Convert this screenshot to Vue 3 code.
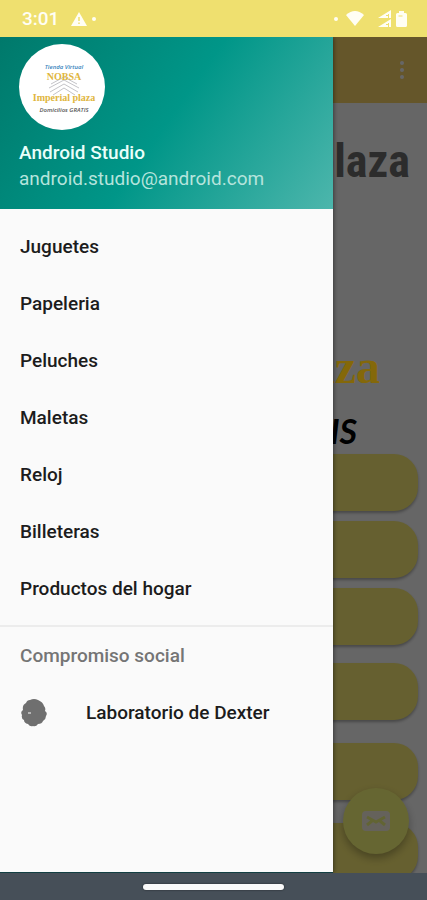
<script setup>
const categories = [
  'Juguetes',
  'Papeleria',
  'Peluches',
  'Maletas',
  'Reloj',
  'Billeteras',
  'Productos del hogar',
]
const groups = [categories.slice(0, 3), categories.slice(3, 4), categories.slice(4, 5), categories.slice(5, 6)]
</script>

<template>
  <div class="phone">
    <header class="status">
      <span class="time">3:01</span>
      <svg class="alert" viewBox="0 0 16 14" width="16" height="14" aria-hidden="true">
        <path d="M8 0 L16 14 H0 Z" fill="#fffef4" />
        <path d="M8 5v4M8 10.500v1.500" stroke="#efe06f" stroke-width="1.500" />
      </svg>
      <span class="dot"></span>
      <span class="space"></span>
      <span class="dot"></span>
      <svg class="wifi" viewBox="0 0 18 15" width="18" height="15" aria-hidden="true">
        <path d="M0 4 Q9 -4 18 4 L9 15 Z" fill="#fffef4" />
      </svg>
      <svg class="signal" viewBox="0 0 14 18" width="14" height="18" aria-hidden="true">
        <path d="M13 0V8H0ZM13 9V17H0Z" fill="#fffef4" />
        <path d="M8 5.500h2M8 14.500h2M10.500 4v4M10.500 13v4" stroke="#efe06f" stroke-width="1" />
      </svg>
      <svg class="battery" viewBox="0 0 11 16" width="11" height="16" aria-hidden="true">
        <path d="M3 0h5v2h1.500q1.500 0 1.500 1.500v11q0 1.500-1.500 1.500h-8q-1.500 0-1.500-1.500v-11q0-1.500 1.500-1.500H3Z" fill="#fffef4" />
        <path d="M2.500 5h4" stroke="#efe06f" />
      </svg>
    </header>

    <main class="screen">
      <div class="page">
        <div class="toolbar">
          <button class="more" type="button" aria-label="Más opciones">
            <i></i><i></i><i></i>
          </button>
        </div>
        <h1 class="title">Imperial plaza</h1>
        <p class="brand">Imperial plaza</p>
        <p class="promo">Domicilios GRATIS</p>
        <div class="actions">
          <div v-for="(group, i) in groups" :key="i" class="group">
            <button v-for="name in group" :key="name" class="action" type="button" :aria-label="name"></button>
          </div>
        </div>
        <button class="fab" type="button" aria-label="Correo">
          <svg viewBox="0 0 28 20" width="28" height="20" aria-hidden="true">
            <rect width="28" height="20" rx="4" fill="#fbf4f4" fill-opacity="0.85" />
            <path d="M5 6 L14 11 L23 6M5 14l5-4M23 14l-5-4" fill="none" stroke="#f4fa80" stroke-width="3" />
          </svg>
        </button>
      </div>
      <div class="scrim"></div>

      <aside class="drawer">
        <div class="profile">
          <svg class="avatar" viewBox="0 0 86 86" width="86" height="86" role="img" aria-label="Imperial plaza">
            <circle cx="43" cy="43" r="43" fill="#fff" />
            <g fill="none" stroke="#c4c4c8" stroke-width="1">
              <path d="M32 40 L45 33 L58 40M30 44 L45 36 L60 44M31 48 L45 40 L59 48M34 51 L45 44 L56 51" />
            </g>
            <g text-anchor="middle">
              <text x="45" y="25" class="tiny blue">Tienda Virtual</text>
              <text x="45" y="36" class="mark">NOBSA</text>
              <text x="45" y="57" class="mark">Imperial plaza</text>
              <text x="45" y="68" class="tiny">Domicilios GRATIS</text>
            </g>
          </svg>
          <span class="name">Android Studio</span>
          <span class="mail">android.studio@android.com</span>
        </div>
        <nav class="menu">
          <a v-for="name in categories" :key="name" class="item" href="#">{{ name }}</a>
        </nav>
        <section class="social">
          <h2 class="subhead">Compromiso social</h2>
          <a class="item with-icon" href="#">
            <svg viewBox="0 0 28 28" width="28" height="28" aria-hidden="true">
              <path d="M10 1 Q14 -1 18 1 Q23 3 24 7 Q26 9 25 12 Q28 14 26 17 Q26 20 23 22 Q22 25 18 25 Q16 28 13 27 Q10 28 8 25 Q4 24 4 21 Q1 20 2 16 Q0 13 3 11 Q2 6 6 4 Q7 1 10 1 Z" fill="#6f6f6f" />
              <path d="M8 14h3" stroke="#b5b5b5" stroke-width="2" />
            </svg>
            <span>Laboratorio de Dexter</span>
          </a>
        </section>
      </aside>
    </main>

    <footer class="navbar"><span class="handle"></span></footer>
  </div>
</template>

<style>
body {
  margin: 0;
}
</style>

<style scoped>
.phone {
  display: flex;
  flex-direction: column;
  height: 100vh;
  font-family: Roboto, "Liberation Sans", sans-serif;
  background: #fff;
}
button {
  border: 0;
  padding: 0;
}
.status {
  display: flex;
  align-items: center;
  flex: none;
  height: 37px;
  padding: 0 20px 0 22px;
  box-sizing: border-box;
  background: #efe06f;
  color: #fffef4;
}
.time {
  font-size: 19px;
  font-weight: 500;
}
.alert {
  margin: 0 5px 0 12px;
}
.dot {
  width: 4px;
  height: 4px;
  border-radius: 50%;
  background: #fffef4;
}
.space {
  flex: 1;
}
.wifi {
  margin: 0 14px 0 8px;
}
.signal {
  margin-right: 4px;
}
.screen {
  position: relative;
  flex: 1;
  min-height: 0;
  overflow: hidden;
}
.page {
  display: flex;
  flex-direction: column;
  height: 100%;
  overflow: hidden;
  background: #fff;
}
.toolbar {
  display: flex;
  flex: none;
  justify-content: flex-end;
  align-items: center;
  height: 66px;
  padding-right: 15px;
  background: #fcd769;
}
.more {
  display: flex;
  flex-direction: column;
  align-items: center;
  gap: 3px;
  width: 20px;
  background: none;
}
.more i {
  width: 4px;
  height: 4px;
  border-radius: 50%;
  background: #fff;
}
.title,
.brand,
.promo {
  flex: none;
  margin: 0;
  text-align: right;
  white-space: nowrap;
}
.title {
  padding: 30px 17px 0 0;
  font: 700 46px/56px "Roboto Condensed", "Liberation Sans Narrow", Roboto, sans-serif;
  color: #6e6e6e;
}
.brand {
  position: relative;
  z-index: 1;
  padding: 150px 47px 0 0;
  font: 700 48px/56px "Liberation Serif", serif;
  color: #84680a;
}
.promo {
  padding: 16px 70px 0 0;
  font: italic 700 34px/40px Lato, "Open Sans", sans-serif;
  color: #000;
}
.actions {
  display: flex;
  flex-direction: column;
  gap: 23px;
  padding: 3px 9px 0;
}
.group {
  display: flex;
  flex-direction: column;
  gap: 10px;
}
.group:first-child {
  margin-bottom: -5px;
}
.action {
  height: 57px;
  border-radius: 24px;
  background: #fff078;
  box-shadow: 0 2px 3px rgba(0, 0, 0, 0.3);
}
.fab {
  position: absolute;
  right: 18px;
  bottom: 19px;
  display: flex;
  align-items: center;
  justify-content: center;
  width: 66px;
  height: 66px;
  border-radius: 50%;
  background: #ffff7d;
  box-shadow: 0 4px 8px rgba(0, 0, 0, 0.3);
}
.scrim {
  position: absolute;
  inset: 0;
  background: rgba(0, 0, 0, 0.6);
}
.drawer {
  position: absolute;
  inset: 0 auto 0 0;
  z-index: 2;
  width: 78%;
  box-sizing: border-box;
  background: #fafafa;
  border-bottom: 1px solid #123f42;
  box-shadow: 0 0 5px rgba(0, 0, 0, 0.6);
}
.profile {
  display: flex;
  flex-direction: column;
  height: 172px;
  padding: 7px 19px 0;
  box-sizing: border-box;
  background: linear-gradient(125deg, #00796b 0%, #009688 50%, #4db6ac 100%);
}
.avatar {
  margin-bottom: 10px;
}
.tiny {
  font: italic 600 6px "Open Sans", sans-serif;
  fill: #555;
}
.tiny.blue {
  fill: #3583bd;
}
.mark {
  font: 700 10px "Liberation Serif", serif;
  fill: #dfb640;
}
.name,
.mail {
  font-size: 19px;
  line-height: 26px;
  color: #e8fffa;
}
.name {
  font-weight: 500;
}
.mail {
  color: #b5e4dc;
}
.menu {
  display: flex;
  flex-direction: column;
  padding: 9px 0 8px;
}
.item {
  display: flex;
  align-items: center;
  height: 57px;
  padding: 0 20px;
  font-size: 19px;
  font-weight: 500;
  color: #1c1c1c;
  text-decoration: none;
}
.social {
  border-top: 2px solid #ececec;
}
.subhead {
  margin: 0;
  padding: 0 20px;
  font-size: 19px;
  font-weight: 500;
  line-height: 57px;
  color: #757575;
}
.with-icon {
  gap: 38px;
}
.navbar {
  display: flex;
  flex: none;
  justify-content: center;
  align-items: center;
  height: 27px;
  background: #464f58;
}
.handle {
  width: 33%;
  height: 6px;
  border-radius: 3px;
  background: #fafafa;
  box-shadow: 0 0 2px rgba(0, 0, 0, 0.6);
}
</style>
